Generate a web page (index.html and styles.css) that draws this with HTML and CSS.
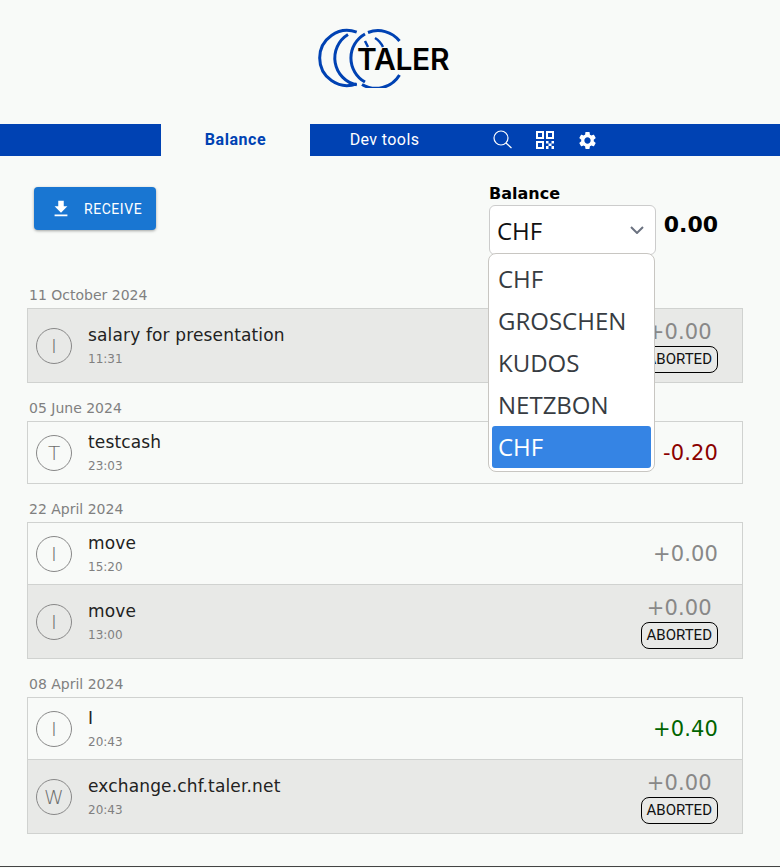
FILE: index.html
```html
<!DOCTYPE html>
<html lang="en">
<head>
    <meta charset="UTF-8">
    <meta name="viewport" content="width=device-width, initial-scale=1.0">
    <title>Taler Wallet</title>
    <link rel="stylesheet" href="styles.css">
</head>
<body>
    <header class="logo-bar">
        <div class="logo">
            <svg width="92" height="60" viewBox="0 0 92 60" fill="none" stroke="#0042b3" stroke-width="3">
                <path d="M38.700 4.200 A27.500 27.500 0 1 0 38.700 55.800"/>
                <path d="M30 6.500 A27.500 27.500 0 0 0 38.700 56.900"/>
                <path d="M47 6 A27.500 27.500 0 0 0 47 54"/>
                <path d="M50 4.500 A27.500 27.500 0 0 1 81.500 13"/>
                <path d="M44 56.500 A27.500 27.500 0 0 0 81.500 47"/>
                <path d="M47 13 L50 19 M57 10 Q62 13 65 19" stroke-width="2.500"/>
            </svg>
            <span class="logo-text">TALER</span>
        </div>
    </header>

    <nav class="navbar">
        <a class="tab active">Balance</a>
        <a class="tab">Dev tools</a>
        <div class="nav-icons">
            <svg width="20" height="20" viewBox="0 0 20 20" fill="none" stroke="#fff" stroke-width="1.200">
                <circle cx="8" cy="8" r="7"/>
                <path d="M13 13 L18.500 18"/>
            </svg>
            <svg width="18" height="18" viewBox="0 0 18 18" fill="#fff">
                <path fill-rule="evenodd" d="M0 0h8v8H0zM2 2v4h4V2zM10 0h8v8h-8zM12 2v4h4V2zM0 10h8v8H0zM2 12v4h4v-4z"/>
                <path d="M10 10h2.500v2.500H10zM15.500 10H18v2.500h-2.500zM12.500 12.500H15.500V15h-3zM10 15h2.500v3H10zM15.500 15H18v3h-2.500z"/>
            </svg>
            <svg width="21" height="21" viewBox="0 0 24 24" fill="#fff">
                <path d="M19.140 12.940c.04-.3.06-.61.06-.94 0-.32-.02-.64-.07-.94l2.030-1.580c.18-.14.23-.41.12-.61l-1.920-3.320c-.12-.22-.37-.29-.59-.22l-2.390.96c-.5-.38-1.030-.7-1.620-.94l-.36-2.540c-.04-.24-.24-.41-.48-.41h-3.840c-.24 0-.43.17-.47.41l-.36 2.540c-.59.24-1.130.57-1.620.94l-2.390-.96c-.22-.08-.47 0-.59.22L2.740 8.870c-.12.21-.08.47.12.61l2.030 1.580c-.05.3-.09.63-.09.94s.02.64.07.94l-2.030 1.580c-.18.14-.23.41-.12.61l1.920 3.320c.12.22.37.29.59.22l2.390-.96c.5.38 1.030.7 1.620.94l.36 2.540c.05.24.24.41.48.41h3.840c.24 0 .44-.17.47-.41l.36-2.540c.59-.24 1.130-.56 1.620-.94l2.390.96c.22.08.47 0 .59-.22l1.920-3.320c.12-.22.07-.47-.12-.61l-2.010-1.580zM12 15.600c-1.980 0-3.600-1.620-3.600-3.600s1.620-3.600 3.600-3.600 3.600 1.620 3.600 3.600-1.620 3.600-3.600 3.600z"/>
            </svg>
        </div>
    </nav>

    <main class="content">
        <section class="top-row">
            <button class="receive-btn">
                <svg width="22" height="22" viewBox="0 0 24 24" fill="#fff">
                    <path d="M19 9h-4V3H9v6H5l7 7 7-7zM5 18v2h14v-2H5z"/>
                </svg>
                <span>RECEIVE</span>
            </button>
            <div class="balance">
                <div class="balance-label">Balance</div>
                <div class="balance-row">
                    <div class="currency-select">
                        <span>CHF</span>
                        <svg width="14" height="8" viewBox="0 0 14 8" fill="none" stroke="#6b7280" stroke-width="2">
                            <path d="M1 1 L7 7 L13 1"/>
                        </svg>
                        <ul class="currency-menu">
                            <li>CHF</li>
                            <li>GROSCHEN</li>
                            <li>KUDOS</li>
                            <li>NETZBON</li>
                            <li class="selected">CHF</li>
                        </ul>
                    </div>
                    <div class="balance-amount">0.00</div>
                </div>
            </div>
        </section>

        <section class="history">
            <div class="date">11 October 2024</div>
            <div class="group">
                <div class="row aborted">
                    <div class="avatar">I</div>
                    <div class="info"><div class="title">salary for presentation</div><div class="time">11:31</div></div>
                    <div class="amount-col"><div class="amount muted">+0.00</div><div class="badge">ABORTED</div></div>
                </div>
            </div>

            <div class="date">05 June 2024</div>
            <div class="group">
                <div class="row">
                    <div class="avatar">T</div>
                    <div class="info"><div class="title">testcash</div><div class="time">23:03</div></div>
                    <div class="amount-col"><div class="amount negative">-0.20</div></div>
                </div>
            </div>

            <div class="date">22 April 2024</div>
            <div class="group">
                <div class="row">
                    <div class="avatar">I</div>
                    <div class="info"><div class="title">move</div><div class="time">15:20</div></div>
                    <div class="amount-col"><div class="amount muted">+0.00</div></div>
                </div>
                <div class="row aborted">
                    <div class="avatar">I</div>
                    <div class="info"><div class="title">move</div><div class="time">13:00</div></div>
                    <div class="amount-col"><div class="amount muted">+0.00</div><div class="badge">ABORTED</div></div>
                </div>
            </div>

            <div class="date">08 April 2024</div>
            <div class="group">
                <div class="row">
                    <div class="avatar">I</div>
                    <div class="info"><div class="title">I</div><div class="time">20:43</div></div>
                    <div class="amount-col"><div class="amount positive">+0.40</div></div>
                </div>
                <div class="row aborted">
                    <div class="avatar">W</div>
                    <div class="info"><div class="title">exchange.chf.taler.net</div><div class="time">20:43</div></div>
                    <div class="amount-col"><div class="amount muted">+0.00</div><div class="badge">ABORTED</div></div>
                </div>
            </div>
        </section>
    </main>
</body>
</html>
```

FILE: styles.css
```css
* {
    box-sizing: border-box;
}

body {
    margin: 0;
    height: 867px;
    background: #f8faf8;
    font-family: "DejaVu Sans", sans-serif;
    color: #222;
    border-bottom: 1px solid #444;
    overflow: hidden;
}

.logo-bar {
    height: 124px;
    display: flex;
    justify-content: center;
    padding-top: 28px;
}

.logo {
    width: 144px;
    position: relative;
}

.logo-text {
    position: absolute;
    left: 39px;
    top: 13px;
    font-family: "Inter", sans-serif;
    font-size: 30px;
    font-weight: 600;
    letter-spacing: -0.3px;
    line-height: 36px;
    color: #000;
}

.navbar {
    height: 32px;
    background: #0042b3;
    display: flex;
    align-items: center;
    padding-left: 161px;
    font-family: "Roboto", sans-serif;
    font-size: 16px;
    letter-spacing: 0.4px;
}

.tab {
    width: 149px;
    height: 32px;
    line-height: 31px;
    text-align: center;
    color: #fff;
}

.tab.active {
    background: #f8faf8;
    color: #0042b3;
    font-weight: 700;
    letter-spacing: 0.55px;
}

.nav-icons {
    display: flex;
    align-items: center;
    gap: 23px;
    margin-left: 34px;
}

.content {
    padding: 0 37px 0 27px;
}

.top-row {
    display: flex;
    justify-content: space-between;
    height: 129px;
    padding: 31px 25px 0 7px;
}

.receive-btn {
    width: 122px;
    height: 43px;
    display: flex;
    align-items: center;
    gap: 12px;
    padding: 0 0 0 16px;
    background: #1976d2;
    color: #fff;
    border: none;
    border-radius: 4px;
    box-shadow: 0 1px 3px rgba(0, 0, 0, 0.35);
    font-family: "Roboto", sans-serif;
    font-size: 14px;
    letter-spacing: 0.55px;
}

.balance {
    width: 229px;
    margin-top: -5px;
}

.balance-label {
    font-size: 16px;
    font-weight: 700;
    color: #000;
    line-height: 23px;
}

.balance-row {
    display: flex;
    gap: 8px;
}

.currency-select {
    position: relative;
    width: 167px;
    height: 50px;
    display: flex;
    align-items: center;
    justify-content: space-between;
    padding: 0 11px 0 7px;
    background: #fff;
    border: 1px solid #ccc;
    border-radius: 6px;
    font-family: "Open Sans", sans-serif;
    font-size: 24px;
    color: #111;
}

.currency-menu {
    position: absolute;
    left: -2px;
    top: 47px;
    width: 167px;
    margin: 0;
    padding: 4px 3px 3px;
    list-style: none;
    background: #fff;
    border: 1px solid #c8c6c2;
    border-radius: 8px;
    font-size: 24px;
    color: #373c42;
    z-index: 2;
}

.currency-menu li {
    height: 42px;
    line-height: 42px;
    padding-left: 6px;
    border-radius: 3px;
}

.currency-menu li.selected {
    background: #3584e4;
    color: #fff;
}

.balance-amount {
    font-size: 22px;
    font-weight: 700;
    color: #000;
    line-height: 40px;
}

.date {
    font-size: 14px;
    line-height: 20px;
    height: 19px;
    margin: 0 0 4px 2px;
    color: #808080;
}

.group {
    border: 1px solid #d0d2d0;
    margin-bottom: 15px;
}

.row {
    display: flex;
    align-items: center;
    height: 61px;
    padding: 0 24px 0 8px;
}

.row.aborted {
    background: #e8e9e7;
    height: 73px;
}

.row + .row {
    border-top: 1px solid #d0d2d0;
    height: 74px;
}

.avatar {
    width: 36px;
    height: 36px;
    border: 1px solid #888;
    border-radius: 50%;
    display: flex;
    align-items: center;
    justify-content: center;
    font-size: 20px;
    font-weight: 200;
    color: #6e6e6e;
}

.info {
    flex: 1;
    margin-left: 16px;
}

.title {
    font-size: 17px;
    letter-spacing: 0.15px;
    line-height: 27px;
    color: #222;
}

.time {
    font-size: 12px;
    line-height: 20px;
    color: #808080;
}

.amount-col {
    display: flex;
    flex-direction: column;
    align-items: center;
}

.amount {
    font-size: 21px;
    letter-spacing: 0.15px;
    line-height: 28px;
}

.amount.muted {
    color: #888;
}

.amount.negative {
    color: #8b0000;
}

.amount.positive {
    color: #006400;
}

.badge {
    font-family: "Roboto", sans-serif;
    font-size: 15px;
    line-height: 25px;
    height: 27px;
    padding: 0 5px;
    border: 1px solid #000;
    border-radius: 8px;
    color: #111;
}
```
